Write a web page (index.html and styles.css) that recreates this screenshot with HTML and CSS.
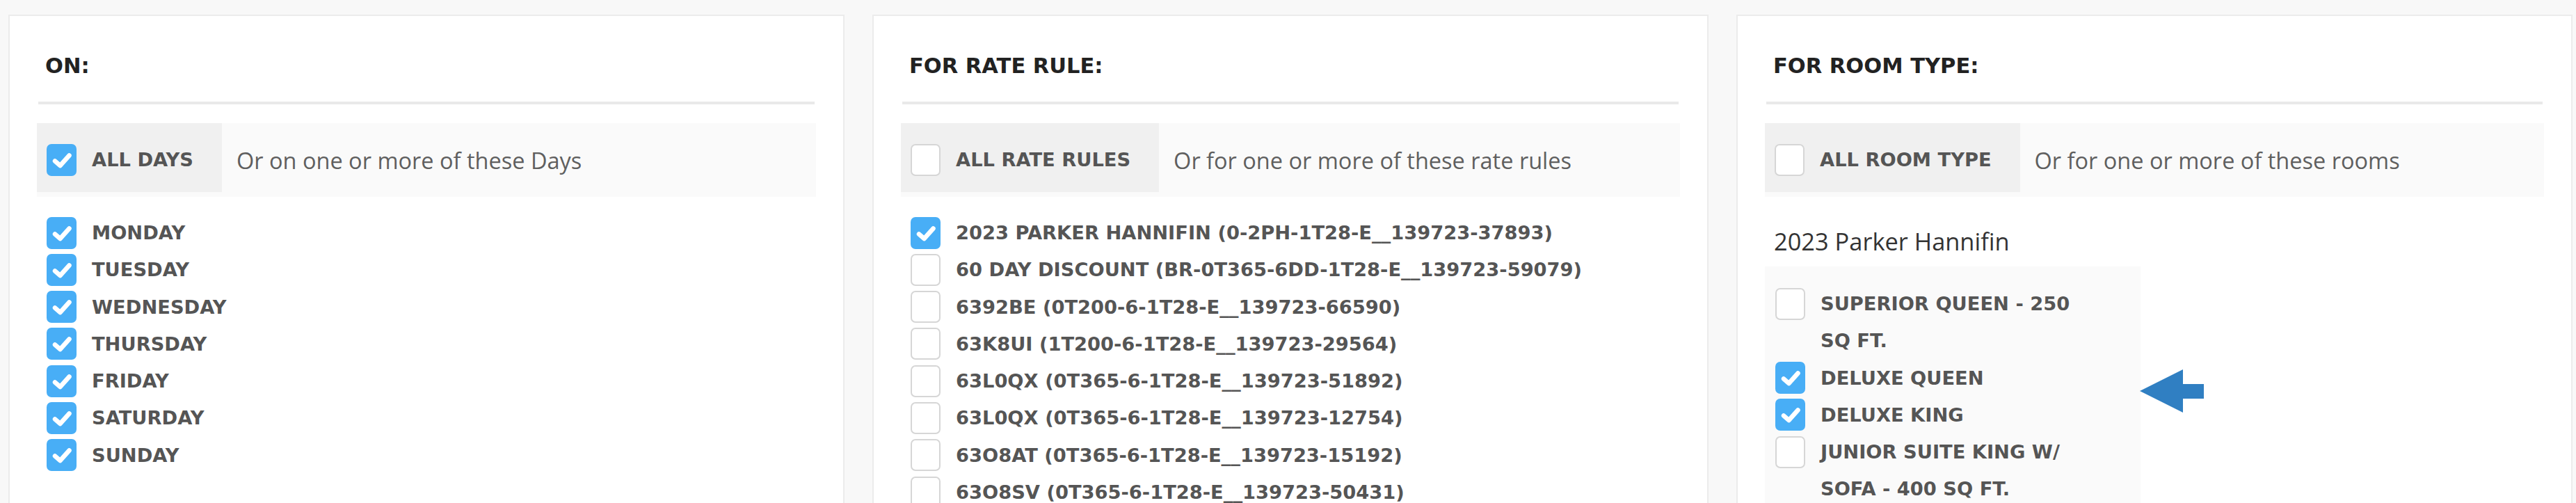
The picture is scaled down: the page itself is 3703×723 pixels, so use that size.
FILE: index.html
```html
<!DOCTYPE html>
<html lang="en">
<head>
  <meta charset="UTF-8" />
  <meta name="viewport" content="width=device-width, initial-scale=1.0"/>
  <title>Restriction - Days, Rate Rules, Room Types</title>
  <link rel="stylesheet" href="styles.css">
</head>
<body>
  <svg width="0" height="0" class="defs">
    <symbol id="tick" viewBox="0 0 43 46">
      <path d="M12 24.5 L19.5 31 L32.5 16.5" fill="none" stroke="#fff" stroke-width="6.5" stroke-linecap="round" stroke-linejoin="round"/>
    </symbol>
  </svg>

  <div class="columns">
    <!-- days -->
    <section class="panel">
      <h3>ON:</h3>
      <hr class="divider">
      <div class="all-row">
        <label class="all-cell">
          <span class="box checked"><svg><use href="#tick"/></svg></span>
          <span>ALL DAYS</span>
        </label>
        <span class="all-hint">Or on one or more of these Days</span>
      </div>
      <ul class="check-list">
        <li><span class="box checked"><svg><use href="#tick"/></svg></span><span>MONDAY</span></li>
        <li><span class="box checked"><svg><use href="#tick"/></svg></span><span>TUESDAY</span></li>
        <li><span class="box checked"><svg><use href="#tick"/></svg></span><span>WEDNESDAY</span></li>
        <li><span class="box checked"><svg><use href="#tick"/></svg></span><span>THURSDAY</span></li>
        <li><span class="box checked"><svg><use href="#tick"/></svg></span><span>FRIDAY</span></li>
        <li><span class="box checked"><svg><use href="#tick"/></svg></span><span>SATURDAY</span></li>
        <li><span class="box checked"><svg><use href="#tick"/></svg></span><span>SUNDAY</span></li>
      </ul>
    </section>

    <!-- rate rules -->
    <section class="panel">
      <h3>FOR RATE RULE:</h3>
      <hr class="divider">
      <div class="all-row">
        <label class="all-cell">
          <span class="box"></span>
          <span>ALL RATE RULES</span>
        </label>
        <span class="all-hint">Or for one or more of these rate rules</span>
      </div>
      <ul class="check-list">
        <li><span class="box checked"><svg><use href="#tick"/></svg></span><span>2023 PARKER HANNIFIN (0-2PH-1T28-E__139723-37893)</span></li>
        <li><span class="box"></span><span>60 DAY DISCOUNT (BR-0T365-6DD-1T28-E__139723-59079)</span></li>
        <li><span class="box"></span><span>6392BE (0T200-6-1T28-E__139723-66590)</span></li>
        <li><span class="box"></span><span>63K8UI (1T200-6-1T28-E__139723-29564)</span></li>
        <li><span class="box"></span><span>63L0QX (0T365-6-1T28-E__139723-51892)</span></li>
        <li><span class="box"></span><span>63L0QX (0T365-6-1T28-E__139723-12754)</span></li>
        <li><span class="box"></span><span>63O8AT (0T365-6-1T28-E__139723-15192)</span></li>
        <li><span class="box"></span><span>63O8SV (0T365-6-1T28-E__139723-50431)</span></li>
      </ul>
    </section>

    <!-- room types -->
    <section class="panel">
      <h3>FOR ROOM TYPE:</h3>
      <hr class="divider">
      <div class="all-row">
        <label class="all-cell">
          <span class="box"></span>
          <span>ALL ROOM TYPE</span>
        </label>
        <span class="all-hint">Or for one or more of these rooms</span>
      </div>
      <p class="group-title">2023 Parker Hannifin</p>
      <div class="room-box">
        <ul class="check-list">
          <li><span class="box"></span><span>SUPERIOR QUEEN - 250 SQ FT.</span></li>
          <li><span class="box checked"><svg><use href="#tick"/></svg></span><span>DELUXE QUEEN</span></li>
          <li><span class="box checked"><svg><use href="#tick"/></svg></span><span>DELUXE KING</span></li>
          <li><span class="box"></span><span>JUNIOR SUITE KING W/ SOFA - 400 SQ FT.</span></li>
        </ul>
        <svg class="arrow" viewBox="0 0 92 62">
          <polygon points="0,31 62,0 62,21 92,21 92,42 62,42 62,62" fill="#307fc2"/>
        </svg>
      </div>
    </section>
  </div>
</body>
</html>
```
FILE: styles.css
```css
* {
  box-sizing: border-box;
}

body {
  margin: 0;
  background: #f8f8f8;
  font-family: "DejaVu Sans", sans-serif;
}

.defs {
  position: absolute;
}

.columns {
  display: grid;
  grid-template-columns: repeat(3, 1fr);
  column-gap: 40px;
  padding: 21px 5px 0 12px;
}

.panel {
  background: #fff;
  border: 2px solid #ececec;
  padding: 0 39px;
  min-height: 780px;
}

.panel h3 {
  margin: 54px 0 0;
  padding-left: 12px;
  font: bold 30.5px/36px "DejaVu Sans", sans-serif;
  color: #222;
}

.divider {
  height: 4px;
  margin: 33px 2px 0;
  border: 0;
  background: #e9e9e9;
}

.all-row {
  display: flex;
  align-items: center;
  margin-top: 27px;
  padding-bottom: 7px;
  background: #fafafa;
}

.all-cell {
  display: flex;
  align-items: center;
  gap: 22px;
  height: 99px;
  padding: 6px 41px 0 14px;
  background: #f0f0f0;
  font: bold 27.3px "DejaVu Sans", sans-serif;
  color: #555;
}

.all-cell .box {
  margin-top: 0;
}

.all-hint {
  margin-left: 21px;
  padding-top: 8px;
  font: 32.5px "Open Sans", sans-serif;
  color: #5f5f5f;
}

.check-list {
  list-style: none;
  margin: 25px 0 0;
  padding: 0 0 0 14px;
}

.check-list li {
  display: flex;
  gap: 22px;
  font: bold 27.3px/53.3px "DejaVu Sans", sans-serif;
  color: #555;
}

.box {
  flex: none;
  width: 43px;
  height: 46px;
  margin-top: 3.6px;
  border: 2px solid #d6d6d6;
  border-radius: 7px;
  background: #fff;
}

.box.checked {
  border: 0;
  background: #48aef6;
}

.box svg {
  display: block;
  width: 43px;
  height: 46px;
}

.group-title {
  margin: 40px 0 0 13px;
  font: 34.4px/47px "Open Sans", sans-serif;
  color: #333;
}

.room-box {
  position: relative;
  width: 540px;
  margin-top: 13px;
  padding: 27px 70px 20px 15px;
  background: #fafafa;
}

.room-box .check-list {
  margin: 0;
  padding: 0;
}

.arrow {
  position: absolute;
  left: 539px;
  top: 148px;
  width: 92px;
  height: 62px;
}
```
